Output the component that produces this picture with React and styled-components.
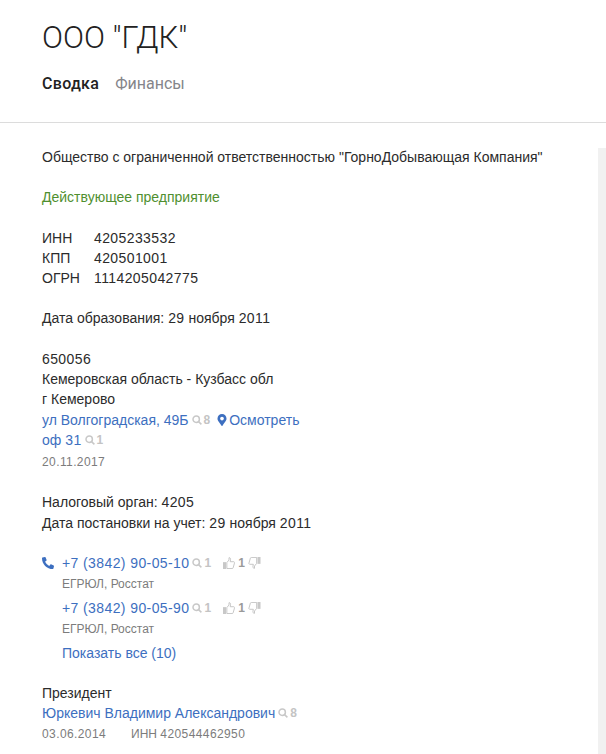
import styled, { createGlobalStyle } from "styled-components";
import { FaPhoneAlt, FaMapMarkerAlt } from "react-icons/fa";

const Global = createGlobalStyle`
  html, body {
    margin: 0;
    padding: 0;
    height: 754px;
    overflow: hidden;
    background: #fff;
  }
  body {
    font-family: "Liberation Sans", Arial, sans-serif;
    font-size: 14px;
    line-height: 20.3px;
    color: #2b2b2b;
  }
`;
const Header = styled.header`
  height: 123px;
  padding: 18px 42px 0;
  box-sizing: border-box;
  border-bottom: 1px solid #dcdcdc;
`;
const Title = styled.h1`
  margin: 0;
  font-family: Roboto, sans-serif;
  font-size: 31px;
  line-height: 40px;
  font-weight: 300;
  color: #222;
`;
const Tabs = styled.nav`
  display: flex;
  gap: 16px;
  margin-top: 16px;
  font-family: Roboto, sans-serif;
  font-size: 16px;
  line-height: 20px;
`;
const Tab = styled.span`
  color: ${(p) => (p.$active ? "#222" : "#85858a")};
  font-weight: ${(p) => (p.$active ? 500 : 400)};
  letter-spacing: ${(p) => (p.$active ? "0.3px" : "0")};
`;
const Body = styled.div`
  display: flex;
  height: 631px;
  overflow: hidden;
`;
const Main = styled.main`
  flex: 1;
  padding: 24px 0 0 42px;
`;
const Track = styled.div`
  width: 8px;
  margin-top: 25px;
  background: #f1f1f1;
`;
const Block = styled.section`
  margin-bottom: 20px;
`;
const Status = styled.div`
  color: #4f8f2f;
`;
const Codes = styled.div`
  display: grid;
  grid-template-columns: 52px auto;
  justify-content: start;
`;
const Num = styled.span`
  letter-spacing: 0.4px;
`;
const Line = styled.div`
  display: flex;
  align-items: center;
`;
const Link = styled.a`
  color: #3d6fc0;
  display: inline-flex;
  align-items: center;
`;
const MapLink = styled(Link)`
  gap: 1px;
  margin-left: 6px;
`;
const Small = styled.div`
  font-size: 12px;
  line-height: 22px;
  color: #7c7c7c;
`;
const AddressDate = styled(Small)`
  margin: 1px 0 -1px;
`;
const Count = styled.span`
  display: inline-flex;
  align-items: center;
  gap: 2px;
  margin-left: 3px;
  font-size: 12px;
  color: #c4c4c4;
  font-weight: 700;
`;
const Votes = styled.span`
  display: inline-flex;
  align-items: center;
  gap: 3px;
  margin-left: 12px;
  font-size: 12px;
  font-weight: 700;
  color: #9a9a9a;
`;
const Phones = styled.section`
  margin-bottom: 19px;
  display: grid;
  grid-template-columns: 20px auto;
  justify-content: start;
`;
const PhoneIcon = styled.span`
  color: #3d6fc0;
  font-size: 12px;
  padding-top: 4px;
  line-height: 12px;
`;
const PhoneRow = styled.div`
  margin-bottom: 3px;
`;
const Meta = styled(Small)`
  display: flex;
  gap: 25px;
`;

const SearchIcon = () => (
  <svg width="10" height="10" viewBox="0 0 10 10" fill="none" stroke="#c8c8c8" strokeWidth="1.5">
    <circle cx="4.2" cy="4.2" r="3.2" />
    <path d="M6.6 6.6 9.4 9.4" />
  </svg>
);
const ThumbUp = () => (
  <svg width="12" height="12" viewBox="0 0 14 14" fill="none" stroke="#bdbdbd">
    <rect x="0" y="6" width="3.500" height="8" fill="#c8c8c8" stroke="none" />
    <path d="M4.500 6.500 7 3.500V.8c1.500 0 2 1 1.800 2.200L8.400 5.500h4c1 0 1.300.9 1 1.600l-1.600 5.500c-.2.600-.6.900-1.200.9H4.500z" />
  </svg>
);
const ThumbDown = () => (
  <svg width="13" height="12" viewBox="0 0 14 14" fill="none" stroke="#bdbdbd">
    <rect x="10.500" y="0" width="3.500" height="8" fill="#c8c8c8" stroke="none" />
    <path d="M9.500 7.500 7 10.500v2.700c-1.500 0-2-1-1.800-2.200l.4-2.500h-4c-1 0-1.300-.9-1-1.600l1.600-5.500c.2-.6.600-.9 1.200-.9h6.100z" />
  </svg>
);

const Hits = ({ n }) => (
  <Count>
    <SearchIcon />
    {n}
  </Count>
);

const Phone = ({ number }) => (
  <PhoneRow>
    <Line>
      <Link><Num>{number}</Num></Link>
      <Hits n={1} />
      <Votes>
        <ThumbUp />
        1
        <ThumbDown />
      </Votes>
    </Line>
    <Small>ЕГРЮЛ, Росстат</Small>
  </PhoneRow>
);

export default function App() {
  return (
    <>
      <Global />
      <Header>
        <Title>ООО "ГДК"</Title>
        <Tabs>
          <Tab $active>Сводка</Tab>
          <Tab>Финансы</Tab>
        </Tabs>
      </Header>
      <Body>
        <Main>
          <Block>Общество с ограниченной ответственностью "ГорноДобывающая Компания"</Block>
          <Block><Status>Действующее предприятие</Status></Block>
          <Block>
            <Codes>
              <span>ИНН</span><Num>4205233532</Num>
              <span>КПП</span><Num>420501001</Num>
              <span>ОГРН</span><Num>1114205042775</Num>
            </Codes>
          </Block>
          <Block>Дата образования: <Num>29</Num> ноября <Num>2011</Num></Block>
          <Block>
            <div><Num>650056</Num></div>
            <div>Кемеровская область - Кузбасс обл</div>
            <div>г Кемерово</div>
            <Line>
              <Link>ул Волгоградская, 49Б</Link>
              <Hits n={8} />
              <MapLink><FaMapMarkerAlt size={12} />Осмотреть</MapLink>
            </Line>
            <Line>
              <Link>оф&nbsp;<Num>31</Num></Link>
              <Hits n={1} />
            </Line>
            <AddressDate><Num>20.11.2017</Num></AddressDate>
          </Block>
          <Block>
            <div>Налоговый орган: <Num>4205</Num></div>
            <div>Дата постановки на учет: <Num>29</Num> ноября <Num>2011</Num></div>
          </Block>
          <Phones>
            <PhoneIcon><FaPhoneAlt /></PhoneIcon>
            <div>
              <Phone number="+7 (3842) 90-05-10" />
              <Phone number="+7 (3842) 90-05-90" />
              <Link>Показать все (10)</Link>
            </div>
          </Phones>
          <Block>
            <div>Президент</div>
            <Line>
              <Link>Юркевич Владимир Александрович</Link>
              <Hits n={8} />
            </Line>
            <Meta>
              <Num>03.06.2014</Num>
              <span>ИНН <Num>420544462950</Num></span>
            </Meta>
          </Block>
        </Main>
        <Track />
      </Body>
    </>
  );
}
